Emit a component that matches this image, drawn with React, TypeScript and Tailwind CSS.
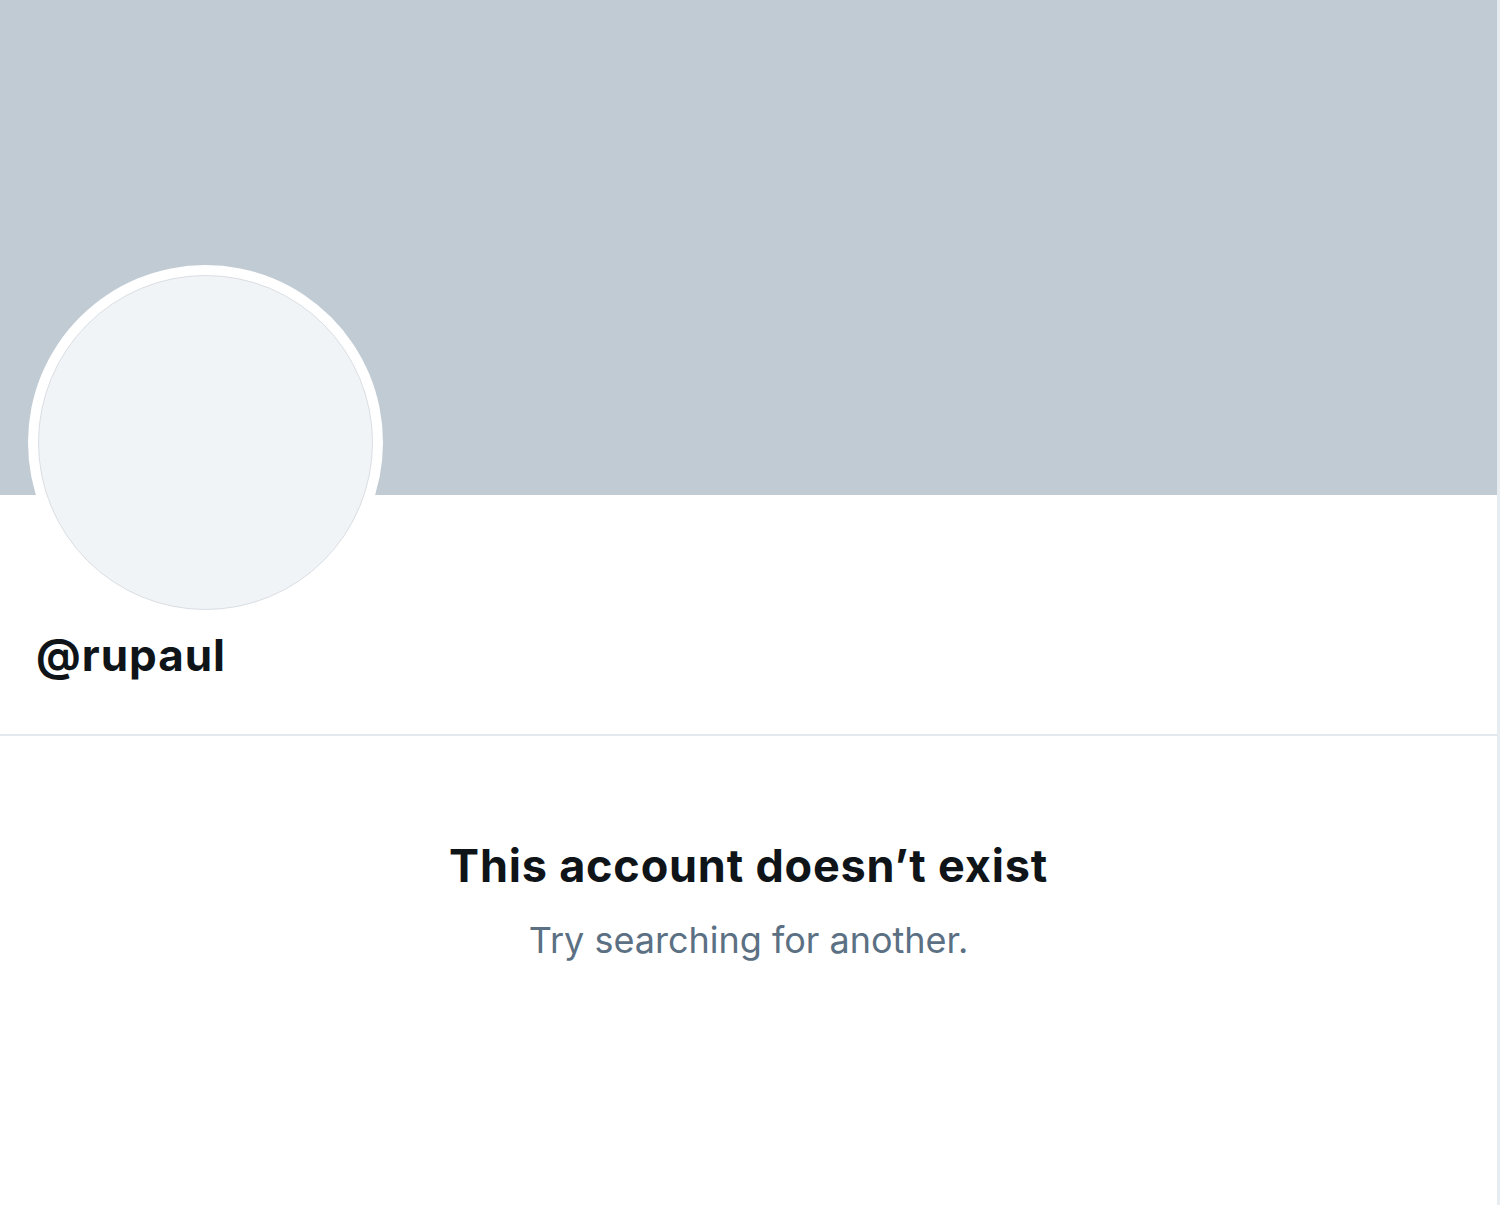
import React from 'react';

const App: React.FC = () => {
  return (
    <div className="min-h-[1205px] w-[1500px] bg-white font-['Inter','Roboto',sans-serif]">
      <div className="min-h-[1205px] w-[1500px] border-r-[3px] border-[#e6ecf0]">
        {/* Banner */}
        <div className="h-[495px] bg-[#c1cbd4]" />

        {/* Avatar + handle */}
        <div className="px-[28px]">
          <div className="-mt-[230px] h-[355px] w-[355px] rounded-full bg-white p-[10px]">
            <div className="h-full w-full rounded-full border border-[#d9dee3] bg-[#f1f4f7]" />
          </div>
          <div className="mt-[5px] pl-[8px] text-[44px] leading-[60px] font-bold tracking-[1px] text-[#0f1419]">
            @rupaul
          </div>
        </div>

        <div className="mt-[49px] h-[2px] bg-[#e3e8ec]" />

        {/* Empty state */}
        <div className="flex flex-col items-center pt-[100px]">
          <h2 className="text-[45px] leading-[60px] font-bold tracking-[0.8px] text-[#0f1419]">
            This account doesn’t exist
          </h2>
          <p className="mt-[22px] text-[36px] leading-[44px] text-[#5b7083]">
            Try searching for another.
          </p>
        </div>
      </div>
    </div>
  );
};

export default App;
